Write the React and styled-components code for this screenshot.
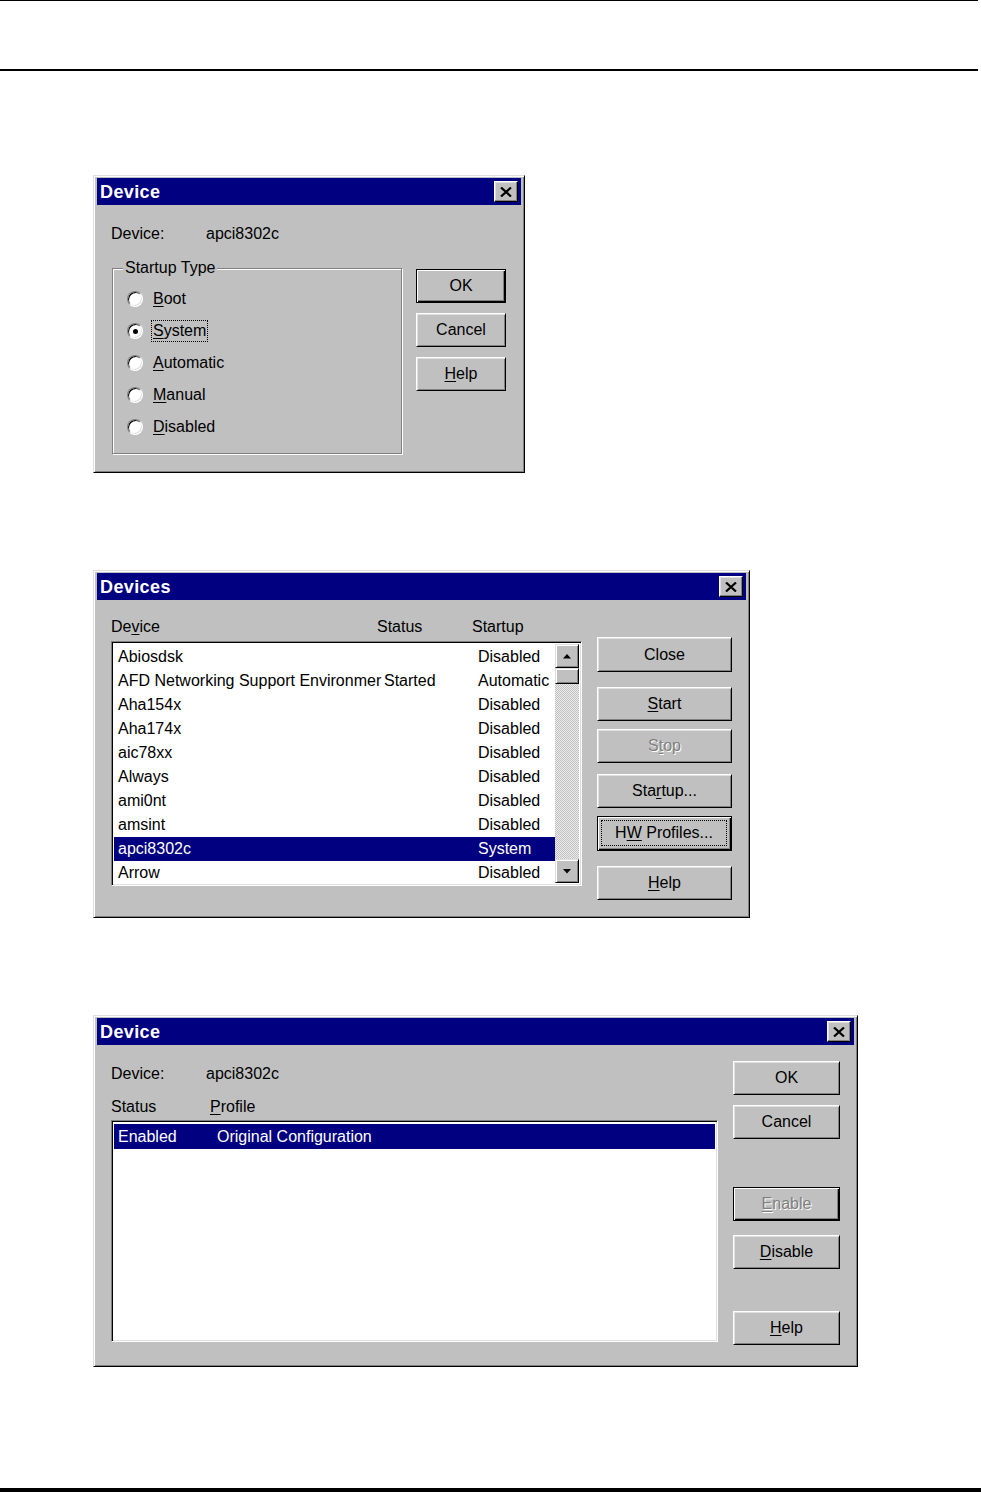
import React from "react";
import styled, { createGlobalStyle } from "styled-components";

const GlobalStyle = createGlobalStyle`
  html, body {
    margin: 0;
    padding: 0;
    background: #fff;
  }
  body {
    font-family: "Liberation Sans", Arial, sans-serif;
    color: #000;
  }
`;

const Page = styled.div`
  width: 981px;
  height: 1492px;
  display: flex;
  flex-direction: column;
  box-sizing: border-box;
`;

const Rule = styled.div`
  flex-shrink: 0;
  width: ${(p) => (p.$full ? 981 : 978)}px;
  height: ${(p) => p.$thick}px;
  margin-top: ${(p) => (p.$auto ? "auto" : `${p.$top || 0}px`)};
  background: #000;
`;

const Window = styled.div`
  box-sizing: border-box;
  flex-shrink: 0;
  width: ${(p) => p.$w}px;
  height: ${(p) => p.$h}px;
  margin: ${(p) => p.$top}px 0 0 93px;
  padding: 2px 3px 3px 3px;
  display: flex;
  flex-direction: column;
  background: #c0c0c0;
  border: 1px solid;
  border-color: #dfdfdf #000 #000 #dfdfdf;
  box-shadow: inset 1px 1px #fff, inset -1px -1px #808080;
  font-size: 16px;
  line-height: 20px;
`;

const TitleBar = styled.div`
  height: 27px;
  flex-shrink: 0;
  display: flex;
  align-items: center;
  justify-content: space-between;
  padding: 0 3px 0 3px;
  background: #000080;
`;

const Title = styled.span`
  color: #fff;
  font-weight: bold;
  font-size: 18px;
  letter-spacing: 0.4px;
`;

const CloseBox = styled.div`
  box-sizing: border-box;
  width: 24px;
  height: 21px;
  display: flex;
  align-items: center;
  justify-content: center;
  background: #c0c0c0;
  border: 1px solid;
  border-color: #fff #000 #000 #fff;
  box-shadow: inset -1px -1px #808080, inset 1px 1px #dfdfdf;
`;

const Body = styled.div`
  flex: 1;
  display: flex;
  align-items: flex-start;
  padding: 0 ${(p) => p.$right}px 0 14px;
`;

const Column = styled.div`
  width: ${(p) => p.$w}px;
  flex-shrink: 0;
  padding-top: ${(p) => p.$top}px;
  display: flex;
  flex-direction: column;
`;

const Line = styled.div`
  height: 20px;
  display: flex;
  margin-top: ${(p) => p.$mt || 0}px;
  white-space: nowrap;
`;

const Label = styled.span`
  width: ${(p) => p.$w}px;
  flex-shrink: 0;
`;

const Key = styled.span`
  text-decoration: underline;
  text-underline-offset: 2px;
`;

const GroupBox = styled.div`
  box-sizing: border-box;
  height: 186px;
  margin: 24px 0 0 1px;
  padding: 0 0 0 14px;
  border: 1px solid #808080;
  box-shadow: inset 1px 1px #fff, 1px 1px #fff;
  display: flex;
  flex-direction: column;
`;

const Legend = styled.div`
  align-self: flex-start;
  margin: -10px 0 6px -4px;
  padding: 0 2px;
  line-height: 18px;
  background: #c0c0c0;
`;

const RadioRow = styled.div`
  height: 32px;
  display: flex;
  align-items: center;
  gap: 8px;
`;

const RadioDot = styled.span`
  box-sizing: border-box;
  width: 16px;
  height: 16px;
  border-radius: 50%;
  background: #fff;
  border: 1px solid;
  border-color: #808080 #fff #fff #808080;
  box-shadow: inset 1px 1px #000, inset -1px -1px #dfdfdf;
  display: flex;
  align-items: center;
  justify-content: center;

  &::after {
    content: "";
    width: 5px;
    height: 5px;
    border-radius: 50%;
    background: ${(p) => (p.$on ? "#000" : "transparent")};
  }
`;

const RadioText = styled.span`
  padding: 0 1px;
  border: 1px dotted ${(p) => (p.$focus ? "#000" : "transparent")};
  line-height: 20px;
`;

const ButtonStack = styled.div`
  width: ${(p) => p.$w}px;
  flex-shrink: 0;
  margin-left: ${(p) => p.$ml}px;
  padding-top: ${(p) => p.$top}px;
  display: flex;
  flex-direction: column;
`;

const Btn = styled.button`
  box-sizing: border-box;
  width: 100%;
  height: ${(p) => p.$h || 34}px;
  margin: ${(p) => p.$mt || 0}px 0 0 0;
  padding: 0;
  display: flex;
  align-items: center;
  justify-content: center;
  font: inherit;
  background: #c0c0c0;
  border: 1px solid;
  border-color: ${(p) => (p.$default ? "#000" : "#fff #000 #000 #fff")};
  box-shadow: ${(p) =>
    p.$default
      ? "inset 1px 1px #fff, inset -1px -1px #000, inset -2px -2px #808080"
      : "inset 1px 1px #dfdfdf, inset -1px -1px #808080"};
  color: ${(p) => (p.$disabled ? "#808080" : "#000")};
  text-shadow: ${(p) => (p.$disabled ? "1px 1px 0 #fff" : "none")};
`;

const FocusRing = styled.span`
  flex: 1;
  align-self: stretch;
  margin: 3px 4px 4px 3px;
  border: 1px dotted #000;
  display: flex;
  align-items: center;
  justify-content: center;
`;

const HeaderRow = styled.div`
  height: 20px;
  display: grid;
  grid-template-columns: ${(p) => p.$cols};
  white-space: nowrap;
`;

const ListBox = styled.div`
  box-sizing: border-box;
  height: ${(p) => p.$h}px;
  margin-top: ${(p) => p.$mt}px;
  display: flex;
  background: #fff;
  border: 1px solid;
  border-color: #808080 #fff #fff #808080;
  box-shadow: inset 1px 1px #000, inset -1px -1px #dfdfdf;
  padding: 2px;
`;

const Rows = styled.div`
  flex: 1;
  min-width: 0;
  padding-top: 1px;
`;

const Row = styled.div`
  height: ${(p) => p.$h}px;
  line-height: ${(p) => p.$h}px;
  display: grid;
  grid-template-columns: ${(p) => p.$cols};
  padding-left: 4px;
  background: ${(p) => (p.$sel ? "#000080" : "transparent")};
  color: ${(p) => (p.$sel ? "#fff" : "#000")};
  white-space: nowrap;
`;

const Cell = styled.span`
  overflow: hidden;
  padding-right: 3px;
`;

const ScrollBar = styled.div`
  width: 24px;
  flex-shrink: 0;
  display: flex;
  flex-direction: column;
`;

const ScrollButton = styled.div`
  box-sizing: border-box;
  height: ${(p) => p.$h}px;
  flex-shrink: 0;
  display: flex;
  align-items: center;
  justify-content: center;
  background: #c0c0c0;
  border: 1px solid;
  border-color: #dfdfdf #000 #000 #dfdfdf;
  box-shadow: inset 1px 1px #fff, inset -1px -1px #808080;
`;

const Track = styled.div`
  flex: 1;
  background: repeating-conic-gradient(#c0c0c0 0 25%, #ececec 0 50%) 0 0 / 2px 2px;
`;

const CloseIcon = () => (
  <svg width="12" height="10" viewBox="0 0 12 10">
    <path d="M1 0.5 L11 9.5 M11 0.5 L1 9.5" stroke="#000" strokeWidth="2.2" />
  </svg>
);

const Arrow = ({ down }) => (
  <svg width="8" height="5" viewBox="0 0 8 5">
    <polygon points={down ? "0,0 8,0 4,4.5" : "0,4.5 8,4.5 4,0"} fill="#000" />
  </svg>
);

const Dialog = ({ title, w, h, top, children }) => (
  <Window $w={w} $h={h} $top={top}>
    <TitleBar>
      <Title>{title}</Title>
      <CloseBox>
        <CloseIcon />
      </CloseBox>
    </TitleBar>
    {children}
  </Window>
);

const startupTypes = [
  { key: "B", rest: "oot" },
  { key: "S", rest: "ystem", on: true },
  { key: "A", rest: "utomatic" },
  { key: "M", rest: "anual" },
  { key: "D", rest: "isabled" },
];

const devices = [
  ["Abiosdsk", "", "Disabled"],
  ["AFD Networking Support Environmer", "Started", "Automatic"],
  ["Aha154x", "", "Disabled"],
  ["Aha174x", "", "Disabled"],
  ["aic78xx", "", "Disabled"],
  ["Always", "", "Disabled"],
  ["ami0nt", "", "Disabled"],
  ["amsint", "", "Disabled"],
  ["apci8302c", "", "System", true],
  ["Arrow", "", "Disabled"],
];

const StartupDialog = () => (
  <Dialog title="Device" w={432} h={298} top={104}>
    <Body $right={15}>
      <Column $w={291} $top={19}>
        <Line>
          <Label $w={95}>Device:</Label>apci8302c
        </Line>
        <GroupBox>
          <Legend>Startup Type</Legend>
          {startupTypes.map((t) => (
            <RadioRow key={t.key}>
              <RadioDot $on={t.on} />
              <RadioText $focus={t.on}>
                <Key>{t.key}</Key>
                {t.rest}
              </RadioText>
            </RadioRow>
          ))}
        </GroupBox>
      </Column>
      <ButtonStack $w={90} $ml={14} $top={64}>
        <Btn $default>OK</Btn>
        <Btn $mt={10}>Cancel</Btn>
        <Btn $mt={10}>
          <Key>H</Key>elp
        </Btn>
      </ButtonStack>
    </Body>
  </Dialog>
);

const DevicesDialog = () => (
  <Dialog title="Devices" w={657} h={348} top={97}>
    <Body $right={14}>
      <Column $w={471} $top={17}>
        <HeaderRow $cols="266px 95px 1fr">
          <span>
            De<Key>v</Key>ice
          </span>
          <span>Status</span>
          <span>Startup</span>
        </HeaderRow>
        <ListBox $h={245} $mt={4}>
          <Rows>
            {devices.map(([name, status, startup, sel]) => (
              <Row key={name} $h={24} $sel={sel} $cols="266px 94px 1fr">
                <Cell>{name}</Cell>
                <Cell>{status}</Cell>
                <Cell>{startup}</Cell>
              </Row>
            ))}
          </Rows>
          <ScrollBar>
            <ScrollButton $h={24}>
              <Arrow />
            </ScrollButton>
            <ScrollButton $h={16} />
            <Track />
            <ScrollButton $h={24}>
              <Arrow down />
            </ScrollButton>
          </ScrollBar>
        </ListBox>
      </Column>
      <ButtonStack $w={135} $ml={15} $top={37}>
        <Btn $h={35}>Close</Btn>
        <Btn $mt={15}>
          <Key>S</Key>tart
        </Btn>
        <Btn $mt={8} $disabled>
          S<Key>t</Key>op
        </Btn>
        <Btn $mt={11}>
          Sta<Key>r</Key>tup...
        </Btn>
        <Btn $mt={8} $h={35} $default>
          <FocusRing>
            H<Key>W</Key>&nbsp;Profiles...
          </FocusRing>
        </Btn>
        <Btn $mt={15}>
          <Key>H</Key>elp
        </Btn>
      </ButtonStack>
    </Body>
  </Dialog>
);

const ProfileDialog = () => (
  <Dialog title="Device" w={765} h={352} top={97}>
    <Body $right={14}>
      <Column $w={607} $top={19}>
        <Line>
          <Label $w={95}>Device:</Label>apci8302c
        </Line>
        <Line $mt={13}>
          <Label $w={99}>Status</Label>
          <span>
            <Key>P</Key>rofile
          </span>
        </Line>
        <ListBox $h={222} $mt={3}>
          <Rows>
            <Row $h={25} $sel $cols="99px 1fr">
              <Cell>Enabled</Cell>
              <Cell>Original Configuration</Cell>
            </Row>
          </Rows>
        </ListBox>
      </Column>
      <ButtonStack $w={107} $ml={15} $top={16}>
        <Btn>OK</Btn>
        <Btn $mt={10}>Cancel</Btn>
        <Btn $mt={48} $default $disabled>
          <span>
            <Key>E</Key>nable
          </span>
        </Btn>
        <Btn $mt={14}>
          <Key>D</Key>isable
        </Btn>
        <Btn $mt={42}>
          <Key>H</Key>elp
        </Btn>
      </ButtonStack>
    </Body>
  </Dialog>
);

export default function App() {
  return (
    <>
      <GlobalStyle />
      <Page>
        <Rule $thick={1} />
        <Rule $thick={2} $top={68} />
        <StartupDialog />
        <DevicesDialog />
        <ProfileDialog />
        <Rule $thick={4} $full $auto />
      </Page>
    </>
  );
}
